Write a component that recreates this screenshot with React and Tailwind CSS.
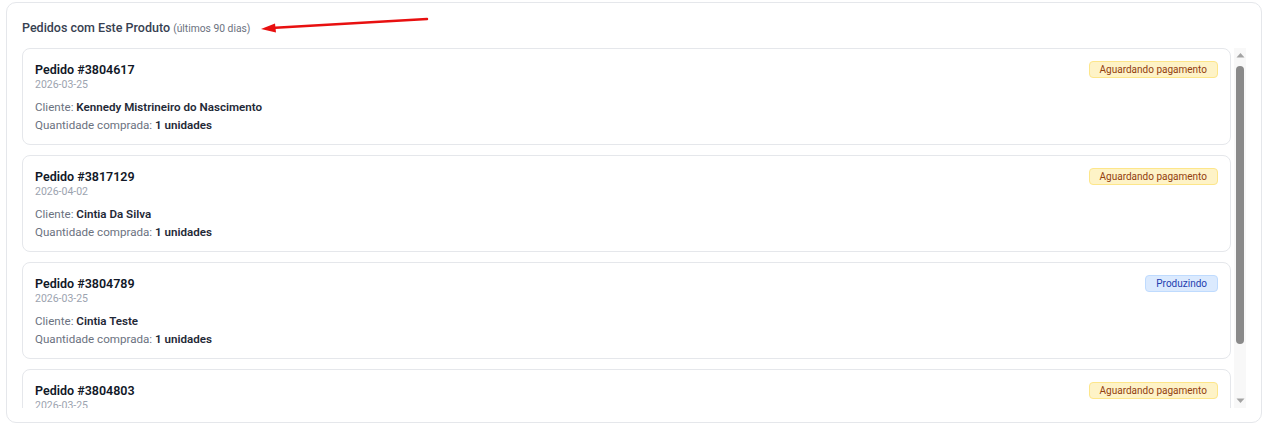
import React from 'react';

const pedidos = [
    { id: '3804617', data: '2026-03-25', cliente: 'Kennedy Mistrineiro do Nascimento', qtd: 1, status: 'aguardando' },
    { id: '3817129', data: '2026-04-02', cliente: 'Cintia Da Silva', qtd: 1, status: 'aguardando' },
    { id: '3804789', data: '2026-03-25', cliente: 'Cintia Teste', qtd: 1, status: 'produzindo' },
    { id: '3804803', data: '2026-03-25', cliente: 'Cintia Teste', qtd: 1, status: 'aguardando' },
];

const StatusBadge = ({ status }) => {
    if (status === 'produzindo') {
        return (
            <span className="block shrink-0 rounded-[4px] border border-[#bfdbfe] bg-[#dbeafe] px-[10px] text-[10px] leading-[15px] text-[#1e40af]">
                Produzindo
            </span>
        );
    }
    return (
        <span className="block shrink-0 rounded-[4px] border border-[#fde68a] bg-[#fef3c7] px-[10px] text-[10px] leading-[15px] text-[#92400e]">
            Aguardando pagamento
        </span>
    );
};

const PedidoCard = ({ pedido }) => (
    <div className="shrink-0 rounded-[8px] border border-[#e5e7eb] bg-white px-[12px] pt-[12px] pb-[10px]">
        <div className="flex items-start justify-between">
            <div>
                <div className="text-[12.5px] font-semibold leading-[17px] text-[#111827]">Pedido #{pedido.id}</div>
                <div className="text-[10.5px] leading-[14px] text-[#9ca3af]">{pedido.data}</div>
            </div>
            <StatusBadge status={pedido.status} />
        </div>
        <div className="mt-[6px] text-[11.6px] leading-[18px] text-[#6b7280]">
            Cliente: <span className="font-semibold text-[#1f2937]">{pedido.cliente}</span>
        </div>
        <div className="text-[11.6px] leading-[18px] text-[#6b7280]">
            Quantidade comprada: <span className="font-semibold text-[#1f2937]">{pedido.qtd} unidades</span>
        </div>
    </div>
);

// barra de rolagem desenhada (setas + trilho)
const Scrollbar = () => (
    <div className="flex w-[12px] shrink-0 flex-col items-center bg-[#f8f8f8]">
        <svg width="9" height="14" viewBox="0 0 9 14" className="shrink-0">
            <path d="M0.5 9.5 L4.5 5 L8.5 9.5 Z" fill="#a3a3a3" />
        </svg>
        <div className="flex w-full flex-1 flex-col px-[2px] pt-[4px]">
            <div className="h-[278px] rounded-[4px] bg-[#8a8a8a]" />
        </div>
        <svg width="9" height="14" viewBox="0 0 9 14" className="shrink-0">
            <path d="M0.5 4.5 L4.5 9 L8.5 4.5 Z" fill="#a3a3a3" />
        </svg>
    </div>
);

export default function App() {
    return (
        <div className="min-h-screen bg-white pt-[2px] pl-[6px] pr-[5px]" style={{ fontFamily: 'Roboto, "Noto Sans", sans-serif' }}>
            <div className="rounded-[10px] border border-[#e5e7eb] bg-white pl-[15px] pr-[15px] pt-[15px] pb-[14px]">
                {/* Cabeçalho com a seta vermelha */}
                <div className="flex h-[20px] items-center">
                    <h2 className="text-[12.5px] font-medium text-[#374151]">
                        Pedidos com Este Produto <span className="text-[10.3px] font-normal text-[#6b7280]">(últimos 90 dias)</span>
                    </h2>
                    <svg width="170" height="16" viewBox="0 0 170 16" className="ml-[11px] mt-[-6px]">
                        <line x1="10" y1="11" x2="166" y2="2" stroke="#e81010" strokeWidth="2.5" strokeLinecap="round" />
                        <path d="M0 12 L14 6.5 L15 15.5 Z" fill="#e81010" />
                    </svg>
                </div>

                <div className="mt-[10px] flex h-[360px] gap-[3px]">
                    <div className="flex flex-1 flex-col gap-[10px] overflow-hidden">
                        {pedidos.map((p) => (
                            <PedidoCard key={p.id} pedido={p} />
                        ))}
                    </div>
                    <Scrollbar />
                </div>
            </div>
        </div>
    );
}
